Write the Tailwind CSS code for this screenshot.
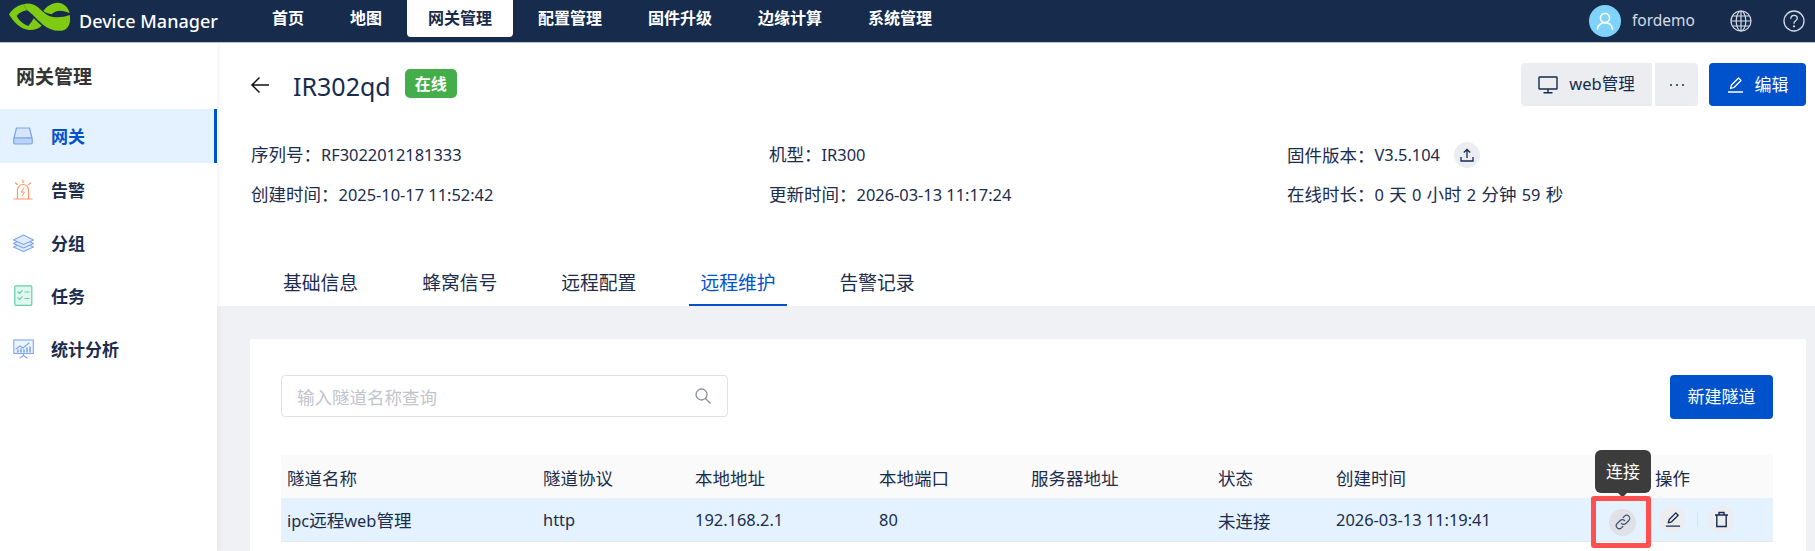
<!DOCTYPE html>
<html lang="zh">
<head>
<meta charset="utf-8">
<script src="https://cdn.jsdelivr.net/npm/@tailwindcss/browser@4"></script>
<title>Device Manager</title>
</head>
<body class="m-0 h-[551px] w-[1815px] overflow-hidden bg-[#f0f1f5] font-['Noto_Sans','Noto_Sans_CJK_SC',sans-serif] text-[#1b2c4d]">
<header class="flex h-[43px] items-start border-b border-[#b9c6d8] bg-[#172b4d] text-white">
  <div class="flex h-[42px] w-[251px] items-center">
    <svg class="ml-[5px] shrink-0" width="70" height="40" viewBox="0 0 210 120" fill="#7fcb14"><path d="M12 40C22 25 38 12 55 10L66 28C52 30 42 36 35 45 42 58 55 70 70 75 76 68 82 60 86 52L110 74C100 84 85 88 72 87 45 85 25 62 12 40Z"/><path d="M55 10C70 5 85 8 98 18 115 32 125 46 145 48 160 50 178 48 194 42 198 60 194 78 180 86 160 94 135 88 115 72 95 55 82 38 66 28Z"/><path d="M115 30C125 15 140 6 158 5 175 5 190 18 194 36 185 32 175 29 165 29 155 29 147 33 140 40 132 38 122 36 115 30Z"/></svg>
    <span class="ml-[4px] whitespace-nowrap text-[18px] font-medium leading-none">Device Manager</span>
  </div>
  <nav class="flex h-[37px] gap-1 text-[16px] font-bold leading-[36px]">
    <a class="px-[21px]">首页</a>
    <a class="px-[21px]">地图</a>
    <a class="rounded-b-[4px] bg-white px-[21px] text-[#172b4d]">网关管理</a>
    <a class="px-[21px]">配置管理</a>
    <a class="px-[21px]">固件升级</a>
    <a class="px-[21px]">边缘计算</a>
    <a class="px-[21px]">系统管理</a>
  </nav>
  <div class="ml-auto flex h-[42px] items-center text-[#d5dce6]">
    <div class="flex h-8 w-8 items-center justify-center rounded-full bg-[#7fd3fb]">
      <svg width="20" height="20" viewBox="0 0 20 20" fill="none" stroke="#fff" stroke-width="1.6" stroke-linecap="round"><circle cx="10" cy="7" r="4.6"/><path d="M2.5 18c.6-4 3.6-6.2 7.5-6.2S16.900 14 17.500 18"/></svg>
    </div>
    <span class="ml-[11px] w-[66px] text-[15.500px] leading-none">fordemo</span>
    <svg class="ml-[32px]" width="22" height="22" viewBox="0 0 22 22" fill="none" stroke="#d5dce6" stroke-width="1.200"><circle cx="11" cy="11" r="10"/><ellipse cx="11" cy="11" rx="4.800" ry="10"/><path d="M11 1v20M1 11h20M2.500 6h17M2.500 16h17"/></svg>
    <svg class="mr-[10px] ml-[31px]" width="22" height="22" viewBox="0 0 22 22" fill="none" stroke="#d5dce6" stroke-width="1.300" stroke-linecap="round"><circle cx="11" cy="11" r="10"/><path d="M7.800 8.500c0-2 1.500-3.200 3.300-3.200s3.200 1.200 3.200 2.900c0 2.600-3.300 2.600-3.300 5.100"/><circle cx="11" cy="16.300" r=".5"/></svg>
  </div>
</header>
<div class="flex h-[508px]">
  <aside class="z-10 w-[217px] shrink-0 bg-white shadow-[2px_0_6px_rgba(0,0,0,0.05)]">
    <h2 class="pt-[21px] pl-4 text-[19px] leading-[26px] font-bold text-[#333]">网关管理</h2>
    <ul class="mt-[19px] text-[17px] font-bold">
      <li class="flex h-[54px] items-center border-r-[3px] border-[#0052cc] bg-[#e3f2fe] pl-[13px] text-[#0052cc]">
        <svg width="20" height="18" viewBox="0 0 20 18" class="shrink-0"><path d="M3.500 1h13l2.500 10H1Z" fill="#d5e5fb" stroke="#7aa3e8" stroke-width="1.200" stroke-linejoin="round"/><rect x=".7" y="11" width="18.600" height="6" rx="1.500" fill="#bcd3f5" stroke="#7aa3e8" stroke-width="1.200"/></svg>
        <span class="ml-[18px] pt-[2px]">网关</span>
      </li>
      <li class="flex h-[53px] items-center pl-[13px]">
        <svg width="20" height="22" viewBox="0 0 20 22" fill="none" stroke="#ff9466" stroke-width="1.200" stroke-linecap="round" class="shrink-0"><path d="M1 20h18M4.500 20v-9a5.500 5.500 0 0 1 11 0v9"/><path d="M10.800 9 8 13h3.500L9.500 16.500" stroke-width="1"/><path d="M10 1v2.500M2.500 4l1.800 1.500M17.500 4l-1.800 1.500"/></svg>
        <span class="ml-[18px] pt-[2px]">告警</span>
      </li>
      <li class="flex h-[53px] items-center pl-[13px]">
        <svg width="21" height="20" viewBox="0 0 21 20" fill="#e2ecfc" stroke="#7ea6ee" stroke-width="1.200" stroke-linejoin="round" class="shrink-0"><path d="m10.500 11.500-10-4.500 10-5 10 5Z" transform="translate(0 7)"/><path d="m10.500 11.500-10-4.500 10-5 10 5Z" transform="translate(0 3.500)"/><path d="m10.500 11.500-10-4.500 10-5 10 5Z"/></svg>
        <span class="ml-[17px] pt-[2px]">分组</span>
      </li>
      <li class="flex h-[53px] items-center pl-[14px]">
        <svg width="19" height="21" viewBox="0 0 19 21" fill="#e0f6ef" stroke="#5fcfae" stroke-width="1.200" stroke-linecap="round" class="shrink-0"><rect x=".8" y=".8" width="17" height="19.500" rx="1"/><path d="m4 7 1.500 1.500L8 5.800M11 7h4M4 13l1.500 1.500L8 11.800M11 13.500h4" fill="none"/></svg>
        <span class="ml-[18px] pt-[2px]">任务</span>
      </li>
      <li class="flex h-[53px] items-center pl-[13px]">
        <svg width="21" height="21" viewBox="0 0 21 21" fill="none" stroke="#7ea6ee" stroke-width="1.100" stroke-linecap="round" class="shrink-0"><rect x=".8" y="2" width="19.500" height="13.500" fill="#eef4fe"/><path d="M10.500 15.500v2M7 20l3.500-2.500L14 20M3 11l4-3 3 2 6-5"/><path d="M5 14v-2M8 14v-3M11 14v-2M14 14v-4M17 14V9" stroke-width="1.600"/></svg>
        <span class="ml-[17px] pt-[2px]">统计分析</span>
      </li>
    </ul>
  </aside>
  <main class="min-w-0 flex-1">
    <section class="h-[263px] bg-white">
      <div class="flex h-[64px] items-start pt-[20px]">
        <svg class="mt-[13px] ml-[33px]" width="20" height="18" viewBox="0 0 20 18" fill="none" stroke="#111" stroke-width="1.500"><path d="M19 9H2M9.500 1.500 2 9l7.500 7.500"/></svg>
        <h1 class="mt-[9px] ml-[23px] text-[25px] leading-[28px] text-[#172b4d]">IR302qd</h1>
        <span class="mt-[6px] ml-[14px] flex h-[29px] w-[52px] items-center justify-center rounded-[5px] bg-[#43ae4a] text-[16px] font-bold text-white">在线</span>
        <div class="ml-auto flex gap-[3px] pr-[9px] text-[16.500px] text-[#172b4d]">
          <button class="flex h-[43px] w-[131px] items-center justify-center rounded-l-[4px] bg-[#ebedf0]">
            <svg width="20" height="18" viewBox="0 0 20 18" fill="none" stroke="#172b4d" stroke-width="1.400"><rect x="1" y="1" width="18" height="12" rx=".5"/><path d="M10 13v3.500M5.500 16.800h9"/></svg>
            <span class="ml-[11px]">web管理</span>
          </button>
          <button class="flex h-[43px] w-[43px] items-center justify-center rounded-r-[4px] bg-[#ebedf0]">
            <svg width="16" height="4" viewBox="0 0 16 4" fill="#172b4d"><circle cx="2" cy="2" r="1"/><circle cx="8" cy="2" r="1"/><circle cx="14" cy="2" r="1"/></svg>
          </button>
          <button class="ml-2 flex h-[43px] w-[97px] items-center justify-center rounded-[4px] bg-[#0052cc] text-[17px] text-white">
            <svg width="17" height="17" viewBox="0 0 17 17" fill="none" stroke="#fff" stroke-width="1.300"><path d="M1 16h15M3.500 12.500l1-3.500 7-7 2.500 2.500-7 7Z" stroke-linejoin="round"/></svg>
            <span class="ml-[11px]">编辑</span>
          </button>
        </div>
      </div>
      <div class="mt-[35px] grid grid-cols-[518px_518px_1fr] gap-y-[14px] pl-[34px] text-[16.400px] leading-[24px]">
        <div><span class="text-[17.500px]">序列号：</span>RF3022012181333</div>
        <div><span class="text-[17.500px]">机型：</span>IR300</div>
        <div class="flex items-center"><span class="text-[17.500px]">固件版本：</span>V3.5.104
          <span class="ml-[14px] flex h-[26px] w-[26px] items-center justify-center rounded-full bg-[#ebedf0]">
            <svg width="14" height="14" viewBox="0 0 14 14" fill="none" stroke="#172b4d" stroke-width="1.300"><path d="M7 10V1.500M3.800 4.500 7 1.500l3.200 3M1 9v4h12V9"/></svg>
          </span>
        </div>
        <div><span class="text-[17.500px]">创建时间：</span>2025-10-17 11:52:42</div>
        <div><span class="text-[17.500px]">更新时间：</span>2026-03-13 11:17:24</div>
        <div class="[word-spacing:1px]"><span class="text-[17.500px]">在线时长：</span>0 <span class="text-[17.500px]">天</span> 0 <span class="text-[17.500px]">小时</span> 2 <span class="text-[17.500px]">分钟</span> 59 <span class="text-[17.500px]">秒</span></div>
      </div>
      <div class="mt-[63px] flex pl-[55px] text-[18.800px] leading-[26px]">
        <a class="mr-[42px] px-[11px] pb-[10px]">基础信息</a>
        <a class="mr-[42px] px-[11px] pb-[10px]">蜂窝信号</a>
        <a class="mr-[42px] px-[11px] pb-[10px]">远程配置</a>
        <a class="mr-[42px] border-b-2 border-[#0052cc] px-[11px] pb-[8px] text-[#0052cc]">远程维护</a>
        <a class="mr-[42px] px-[11px] pb-[10px]">告警记录</a>
      </div>
    </section>
    <section class="mt-[33px] mr-[9px] ml-[33px] h-[212px] bg-white pt-[36px] pr-[33px] pl-[31px]">
      <div class="flex items-start justify-between">
        <div class="flex h-[42px] w-[447px] items-center justify-between rounded-[4px] border border-[#dfe1e6] pr-[16px] pl-[15px] text-[17.500px] text-[#c1c4cb]">
          <span class="pt-[2px]">输入隧道名称查询</span>
          <svg width="16" height="16" viewBox="0 0 16 16" fill="none" stroke="#8a8f99" stroke-width="1.300"><circle cx="6.500" cy="6.500" r="5.500"/><path d="m10.500 10.500 5 5"/></svg>
        </div>
        <button class="h-[44px] w-[103px] rounded-[4px] bg-[#0052cc] text-[17px] text-white">新建隧道</button>
      </div>
      <table class="mt-[36px] w-full table-fixed border-collapse text-left text-[16.400px]">
        <colgroup>
          <col class="w-[262px]"><col class="w-[152px]"><col class="w-[184px]"><col class="w-[152px]"><col class="w-[187px]"><col class="w-[118px]"><col class="w-[319px]"><col>
        </colgroup>
        <thead class="text-[17.500px]">
          <tr class="h-[43px] bg-[#fafafa]">
            <th class="pt-[3px] pl-[6px] font-normal">隧道名称</th>
            <th class="pt-[3px] font-normal">隧道协议</th>
            <th class="pt-[3px] font-normal">本地地址</th>
            <th class="pt-[3px] font-normal">本地端口</th>
            <th class="pt-[3px] font-normal">服务器地址</th>
            <th class="pt-[3px] font-normal">状态</th>
            <th class="pt-[3px] font-normal">创建时间</th>
            <th class="pt-[3px] font-normal">操作</th>
          </tr>
        </thead>
        <tbody>
          <tr class="h-[43px] border-b border-[#e6e8ec] bg-[#e3f2fe]">
            <td class="pt-[3px] pl-[6px]">ipc<span class="text-[17.500px]">远程</span>web<span class="text-[17.500px]">管理</span></td>
            <td class="pt-[3px]">http</td>
            <td class="pt-[3px]">192.168.2.1</td>
            <td class="pt-[3px]">80</td>
            <td></td>
            <td class="pt-[3px] text-[17.500px]">未连接</td>
            <td class="pt-[3px]">2026-03-13 11:19:41</td>
            <td class="relative">
              <div class="absolute top-[-48px] left-[-60px] flex h-[43px] w-[56px] items-center justify-center rounded-[6px] bg-[#3c3c3c] text-[17px] text-white">连接
                <span class="absolute bottom-[-3px] left-[24px] h-[7px] w-[7px] rotate-45 bg-[#3c3c3c]"></span>
              </div>
              <div class="absolute top-[-2px] left-[-64px] flex h-[52px] w-[60px] items-center justify-center rounded-[3px] border-[5px] border-[#ff5050]">
                <span class="ml-[3px] flex h-[27px] w-[27px] items-center justify-center rounded-full bg-[#dfe1e6]">
                  <svg width="16" height="16" viewBox="0 0 16 16" fill="none" stroke="#42526e" stroke-width="1.200" stroke-linecap="round"><path d="M6.500 9.500a3 3 0 0 0 4.300 0l3-3a3 3 0 0 0-4.300-4.300L8.200 3.500"/><path d="M9.500 6.500a3 3 0 0 0-4.300 0l-3 3a3 3 0 0 0 4.300 4.300l1.300-1.300"/></svg>
                </span>
              </div>
              <div class="flex items-center pl-[4px]">
                <span class="flex h-[27px] w-[27px] items-center justify-center rounded-full bg-[#ebedf0]">
                  <svg width="16" height="16" viewBox="0 0 17 17" fill="none" stroke="#172b4d" stroke-width="1.400"><path d="M1 16h15M3.500 12.500l1-3.500 7-7 2.500 2.500-7 7Z" stroke-linejoin="round"/></svg>
                </span>
                <span class="mx-[10.500px] h-[15px] w-px bg-[#dfe1e6]"></span>
                <span class="flex h-[27px] w-[27px] items-center justify-center rounded-full bg-[#ebedf0]">
                  <svg width="15" height="17" viewBox="0 0 15 17" fill="none" stroke="#172b4d" stroke-width="1.400"><path d="M1 4h13M5 4V1.500h5V4M2.800 4v11.500h9.400V4"/></svg>
                </span>
              </div>
            </td>
          </tr>
        </tbody>
      </table>
    </section>
  </main>
</div>
</body>
</html>
